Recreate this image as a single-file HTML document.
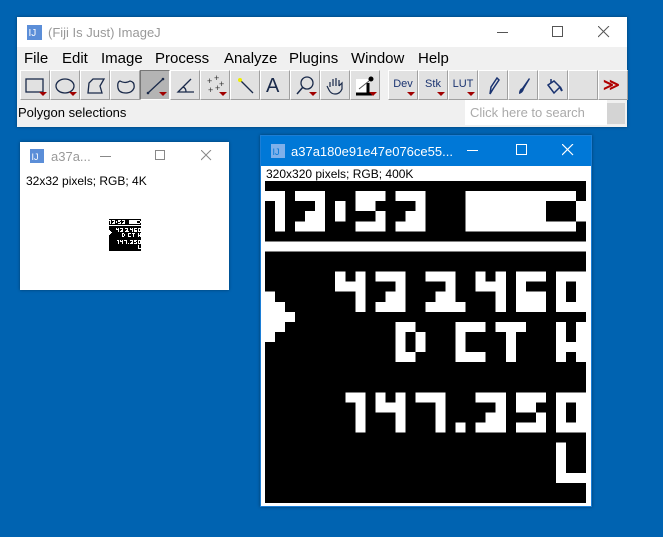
<!DOCTYPE html>
<html><head><meta charset="utf-8"><style>
*{margin:0;padding:0;box-sizing:border-box}
body{width:663px;height:537px;background:#0063b1;position:relative;overflow:hidden;font-family:"Liberation Sans",sans-serif}
.abs{position:absolute}
.win{position:absolute;background:#fff;box-shadow:0 0 3px rgba(0,0,0,.4)}
.btn{position:absolute;top:70px;width:30px;height:30px;background:#e1e1e1;border-top:1px solid #fff;border-left:1px solid #fff;border-right:1px solid #a0a0a0;border-bottom:1px solid #a0a0a0}
.btn svg{position:absolute;left:0;top:0}
.tri{position:absolute;right:2px;bottom:3px;width:0;height:0;border-left:4px solid transparent;border-right:4px solid transparent;border-top:4px solid #a00000}
.lbl{position:absolute;top:7px;left:0;width:28px;text-align:center;font-size:11px;color:#1a3370}
.m{position:absolute;top:33px;font-size:15px;color:#000}
</style></head><body>

<div class="win" style="left:17px;top:17px;width:610px;height:110px;background:#f0f0f0">
 <div class="abs" style="left:0;top:0;width:610px;height:30px;background:#fff"></div>
 <svg class="abs" style="left:10px;top:8px" width="15" height="15"><rect width="15" height="15" fill="#5b8ed8"/><text x="1.5" y="11" font-size="10" fill="#fff" font-family="Liberation Sans">IJ</text></svg>
 <div class="abs" style="left:31px;top:8px;font-size:13px;color:#999">(Fiji Is Just) ImageJ</div>
 <div class="abs" style="left:480px;top:15px;width:11px;height:1px;background:#555"></div>
 <div class="abs" style="left:535px;top:9px;width:11px;height:11px;border:1px solid #555"></div>
 <svg class="abs" style="left:581px;top:9px" width="12" height="12"><path d="M0 0L11 11M11 0L0 11" stroke="#555" stroke-width="1"/></svg>
 <div class="m" style="left:7px">File</div>
 <div class="m" style="left:45px">Edit</div>
 <div class="m" style="left:84px">Image</div>
 <div class="m" style="left:138px">Process</div>
 <div class="m" style="left:207px">Analyze</div>
 <div class="m" style="left:272px">Plugins</div>
 <div class="m" style="left:334px">Window</div>
 <div class="m" style="left:401px">Help</div>
 <div class="abs" style="left:1px;top:88px;font-size:13px;color:#000">Polygon selections</div>
 <div class="abs" style="left:448px;top:83px;width:142px;height:25px;background:#fff;font-size:13px;color:#aaa;padding:5px 0 0 5px">Click here to search</div>
 <div class="abs" style="left:590px;top:86px;width:18px;height:21px;background:#d4d4d4"></div>
</div>

<div class="btn" style="left:20px"><svg width="30" height="30"><rect x="5" y="8" width="17" height="13" fill="none" stroke="#1a2a4a" stroke-width="1.3"/></svg><div class="tri"></div></div>
<div class="btn" style="left:50px"><svg width="30" height="30"><ellipse cx="14" cy="15" rx="9" ry="7" fill="none" stroke="#1a2a4a" stroke-width="1.3"/></svg><div class="tri"></div></div>
<div class="btn" style="left:80px"><svg width="30" height="30"><path d="M7 22 L8 12 L12 8 L23 8 L19 15 L21 22 Z" fill="none" stroke="#1a2a4a" stroke-width="1.3"/></svg></div>
<div class="btn" style="left:110px"><svg width="30" height="30"><path d="M9 10 Q14 13 19 10 Q24 11 23 17 Q21 22 15 22 Q8 22 7 17 Q6 11 9 10Z" fill="none" stroke="#1a2a4a" stroke-width="1.3"/></svg></div>
<div class="btn" style="left:140px;background:#b4b4b4;border-color:#777 #fff #fff #777"><svg width="30" height="30"><line x1="7" y1="22" x2="22" y2="8" stroke="#1a2a4a" stroke-width="1.3"/><circle cx="7" cy="22" r="1.3" fill="#1a2a4a"/><circle cx="22" cy="8" r="1.3" fill="#1a2a4a"/></svg><div class="tri"></div></div>
<div class="btn" style="left:170px"><svg width="30" height="30"><path d="M20 8 L7 21 L23 21 M15 21 Q15 17 12 16" fill="none" stroke="#1a2a4a" stroke-width="1.3"/></svg></div>
<div class="btn" style="left:200px"><svg width="30" height="30" font-size="9" fill="#333"><text x="6" y="13">+</text><text x="13" y="10">+</text><text x="18" y="16">+</text><text x="7" y="22">+</text><text x="14" y="20">+</text></svg><div class="tri"></div></div>
<div class="btn" style="left:230px"><svg width="30" height="30"><line x1="9" y1="9" x2="22" y2="22" stroke="#1a2a4a" stroke-width="1.3"/><circle cx="9" cy="9" r="2" fill="#ee0"/></svg></div>
<div class="btn" style="left:260px"><div class="abs" style="left:5px;top:4px;font-size:20px;color:#1a2a4a">A</div></div>
<div class="btn" style="left:290px"><svg width="30" height="30"><circle cx="16" cy="12" r="6" fill="none" stroke="#1a2a4a" stroke-width="1.3"/><line x1="12" y1="16" x2="6" y2="23" stroke="#1a2a4a" stroke-width="1.5"/></svg><div class="tri"></div></div>
<div class="btn" style="left:320px"><svg width="30" height="30"><path d="M9 16 L9 11 M12 15 L12 8 M15 15 L15 7 M18 15 L18 9 M18 15 L21 12 L21 18 Q19 23 14 23 Q10 23 8 19 L6 15" fill="none" stroke="#1a2a4a" stroke-width="1.2"/></svg></div>
<div class="btn" style="left:350px"><svg width="30" height="30"><rect x="5" y="8" width="12" height="15" fill="#fff"/><path d="M5 23 L21 23 M17 23 L17 12" stroke="#000" stroke-width="3"/><circle cx="20" cy="8" r="2.5" fill="#000"/><line x1="8" y1="18" x2="18" y2="10" stroke="#555"/></svg><div class="tri"></div></div>
<div class="btn" style="left:388px"><div class="lbl">Dev</div><div class="tri"></div></div>
<div class="btn" style="left:418px"><div class="lbl">Stk</div><div class="tri"></div></div>
<div class="btn" style="left:448px"><div class="lbl">LUT</div><div class="tri"></div></div>
<div class="btn" style="left:478px"><svg width="30" height="30"><path d="M11 23 L12 16 L18 7 L20 9 L14 18 Z" fill="none" stroke="#1a3370" stroke-width="1.5"/></svg></div>
<div class="btn" style="left:508px"><svg width="30" height="30"><path d="M10 23 Q10 18 13 17 L20 7 L21 8 L15 18 Q14 22 10 23Z" fill="#1a3370"/></svg></div>
<div class="btn" style="left:538px"><svg width="30" height="30"><path d="M9 14 L15 10 L21 16 L15 22 Z" fill="none" stroke="#1a3370" stroke-width="1.5"/><path d="M12 12 L12 8" stroke="#1a3370" stroke-width="1.5"/><path d="M21 16 L23 20" stroke="#1a3370" stroke-width="2"/></svg></div>
<div class="btn" style="left:568px"></div>
<div class="btn" style="left:598px"><div class="abs" style="left:4px;top:4px;font-size:16px;color:#b00000;font-weight:bold">≫</div></div>

<div class="win" style="left:20px;top:142px;width:209px;height:148px">
 <svg class="abs" style="left:10px;top:7px" width="14" height="14"><rect width="14" height="14" fill="#5b8ed8"/><text x="1.5" y="11" font-size="9" fill="#fff">IJ</text></svg>
 <div class="abs" style="left:31px;top:7px;font-size:13px;color:#999">a37a...</div>
 <div class="abs" style="left:80px;top:14px;width:11px;height:1px;background:#888"></div>
 <div class="abs" style="left:135px;top:8px;width:10px;height:10px;border:1px solid #888"></div>
 <svg class="abs" style="left:181px;top:8px" width="11" height="11"><path d="M0 0L10 10M10 0L0 10" stroke="#888"/></svg>
 <div class="abs" style="left:6px;top:32px;font-size:12px;color:#000">32x32 pixels; RGB; 4K</div>
 <svg class="abs" style="left:89px;top:77px" width="32" height="32"><use href="#img"/></svg>
</div>

<div class="win" style="left:260px;top:135px;width:332px;height:372px;border:1px solid #1c7ed6">
 <div class="abs" style="left:0;top:0;width:330px;height:30px;background:#0078d7"></div>
 <svg class="abs" style="left:10px;top:8px" width="14" height="14"><rect width="14" height="14" fill="#7fb0ea"/><text x="1.5" y="11" font-size="9" fill="#0078d7">IJ</text></svg>
 <div class="abs" style="left:30px;top:8px;font-size:13px;color:#fff">a37a180e91e47e076ce55...</div>
 <div class="abs" style="left:206px;top:14px;width:11px;height:1px;background:#fff"></div>
 <div class="abs" style="left:255px;top:8px;width:11px;height:11px;border:1px solid #fff"></div>
 <svg class="abs" style="left:301px;top:8px" width="12" height="12"><path d="M0 0L11 11M11 0L0 11" stroke="#fff" stroke-width="1.2"/></svg>
 <div class="abs" style="left:5px;top:31px;font-size:12px;color:#000">320x320 pixels; RGB; 400K</div>
 <svg class="abs" style="left:4px;top:45px" width="321" height="322" viewBox="0 0 32 32" preserveAspectRatio="none">
  <g id="img" shape-rendering="crispEdges">
  <rect width="32" height="32" fill="#000"/>
  <g fill="#fff">
  <rect x="0" y="1" width="2" height="1"/><rect x="1" y="2" width="1" height="3"/>
  <rect x="3" y="1" width="3" height="1"/><rect x="5" y="2" width="1" height="1"/><rect x="4" y="3" width="2" height="1"/><rect x="3" y="4" width="3" height="1"/>
  <rect x="7" y="2" width="1" height="2"/>
  <rect x="9" y="1" width="3" height="1"/><rect x="9" y="2" width="2" height="1"/><rect x="11" y="3" width="1" height="1"/><rect x="9" y="4" width="3" height="1"/>
  <rect x="13" y="1" width="3" height="1"/><rect x="15" y="2" width="1" height="1"/><rect x="14" y="3" width="2" height="1"/><rect x="13" y="4" width="3" height="1"/>
  <rect x="20" y="1" width="11" height="1"/><rect x="20" y="2" width="8" height="2"/><rect x="31" y="2" width="1" height="2"/><rect x="20" y="4" width="11" height="1"/>
  <rect x="0" y="6" width="32" height="1"/>
  <rect x="7" y="9" width="1" height="2"/><rect x="8" y="10" width="1" height="1"/><rect x="9" y="9" width="1" height="4"/>
  <rect x="11" y="9" width="3" height="1"/><rect x="13" y="10" width="1" height="1"/><rect x="12" y="11" width="2" height="1"/><rect x="11" y="12" width="3" height="1"/>
  <rect x="16" y="9" width="3" height="1"/><rect x="18" y="10" width="1" height="1"/><rect x="17" y="11" width="2" height="1"/><rect x="16" y="12" width="3" height="1"/>
  <rect x="19" y="12" width="1" height="1"/>
  <rect x="21" y="9" width="1" height="2"/><rect x="22" y="10" width="1" height="1"/><rect x="23" y="9" width="1" height="4"/>
  <rect x="25" y="9" width="3" height="1"/><rect x="25" y="10" width="1" height="3"/><rect x="26" y="11" width="2" height="2"/>
  <rect x="29" y="9" width="3" height="1"/><rect x="29" y="10" width="1" height="2"/><rect x="31" y="10" width="1" height="2"/><rect x="29" y="12" width="3" height="1"/>
  <rect x="0" y="11" width="1" height="5"/><rect x="1" y="12" width="1" height="3"/><rect x="2" y="13" width="1" height="1"/>
  <rect x="13" y="14" width="2" height="1"/><rect x="13" y="15" width="1" height="2"/><rect x="15" y="15" width="1" height="2"/><rect x="13" y="17" width="2" height="1"/>
  <rect x="19" y="14" width="3" height="1"/><rect x="19" y="15" width="1" height="2"/><rect x="19" y="17" width="3" height="1"/>
  <rect x="23" y="14" width="3" height="1"/><rect x="24" y="15" width="1" height="3"/>
  <rect x="29" y="14" width="1" height="4"/><rect x="31" y="14" width="1" height="4"/><rect x="30" y="16" width="1" height="1"/>
  <rect x="8" y="21" width="2" height="1"/><rect x="9" y="22" width="1" height="3"/>
  <rect x="11" y="21" width="1" height="2"/><rect x="12" y="22" width="1" height="1"/><rect x="13" y="21" width="1" height="4"/>
  <rect x="15" y="21" width="3" height="1"/><rect x="17" y="22" width="1" height="3"/>
  <rect x="19" y="24" width="1" height="1"/>
  <rect x="21" y="21" width="3" height="1"/><rect x="23" y="22" width="1" height="1"/><rect x="22" y="23" width="2" height="1"/><rect x="21" y="24" width="3" height="1"/>
  <rect x="25" y="21" width="3" height="1"/><rect x="25" y="22" width="2" height="1"/><rect x="27" y="23" width="1" height="1"/><rect x="25" y="24" width="3" height="1"/>
  <rect x="29" y="21" width="3" height="1"/><rect x="29" y="22" width="1" height="2"/><rect x="31" y="22" width="1" height="2"/><rect x="29" y="24" width="3" height="1"/>
  <rect x="29" y="26" width="1" height="4"/><rect x="30" y="29" width="2" height="1"/>
  </g></g>
 </svg>
</div>
</body></html>
